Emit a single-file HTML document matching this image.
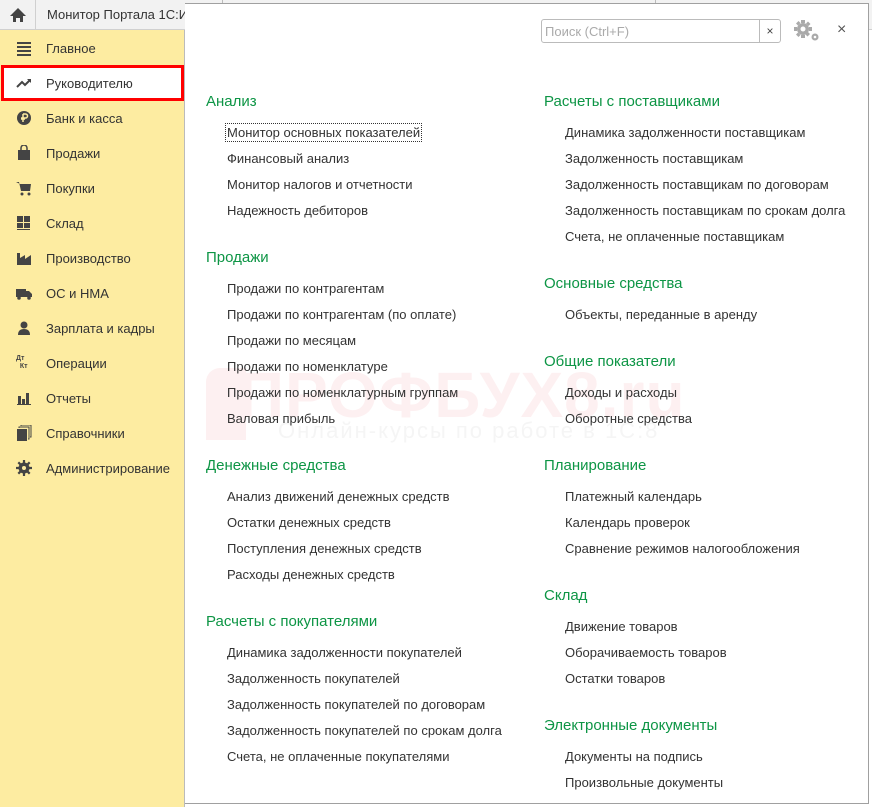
<!DOCTYPE html>
<html><head><meta charset="utf-8"><style>
*{margin:0;padding:0;box-sizing:border-box}
body{width:872px;height:807px;position:relative;overflow:hidden;background:#fff;font-family:"Liberation Sans",Arial,sans-serif;color:#333}
#top{position:absolute;left:0;top:0;width:872px;height:30px;background:#f2f2f2;border-bottom:1px solid #d0d0d0}
#home{position:absolute;left:0;top:0;width:36px;height:30px;border-right:1px solid #d0d0d0}
#tab{position:absolute;left:47px;top:7px;font-size:13px;color:#333}
#side{position:absolute;left:0;top:30px;width:185px;height:777px;background:#fdeca1;border-right:1px solid #bbb}
.si{position:absolute;left:46px;font-size:13px;color:#333}
.ic{position:absolute;left:16px;width:16px;height:16px}
#red{position:absolute;left:1px;top:65px;width:183px;height:36px;background:#fff;border:3px solid #f00}
#panel{position:absolute;left:185px;top:3px;width:684px;height:801px;background:#fff;border:1px solid #a0a0a0;border-left:none}
.h{position:absolute;font-size:15px;color:#0d9545;white-space:nowrap;margin-top:1px}
.l{position:absolute;font-size:13px;color:#333;white-space:nowrap;margin-top:1px}
#search{position:absolute;left:541px;top:19px;width:219px;height:24px;border:1px solid #bbb;border-radius:3px 0 0 3px;font-size:13px;color:#aaa;padding:4px 3px}
#sx{position:absolute;left:759px;top:19px;width:22px;height:24px;border:1px solid #bbb;border-radius:0 3px 3px 0;font-size:12px;text-align:center;line-height:22px;color:#444}
.wm{position:absolute;color:#fdf0f1;white-space:nowrap}
</style></head><body>
<div id="top">
<div id="home"><svg width="36" height="30"><path d="M10 16 L18 8 L26 16 L23 16 L23 22 L20 22 L20 18 L16 18 L16 22 L13 22 L13 16 Z" fill="#444"/></svg></div>
<div id="tab">Монитор Портала 1С:И</div>
<div style="position:absolute;left:222px;top:0;width:1px;height:4px;background:#bbb"></div>
<div style="position:absolute;left:655px;top:0;width:1px;height:4px;background:#bbb"></div>
</div>
<div id="side"></div>
<div id="red"></div>
<svg class="ic" style="top:40px" viewBox="0 0 16 16"><rect x="1" y="2" width="14" height="2" fill="#444"/><rect x="1" y="6" width="14" height="2" fill="#444"/><rect x="1" y="10" width="14" height="2" fill="#444"/><rect x="1" y="14" width="14" height="2" fill="#444"/></svg>
<div class="si" style="top:41px">Главное</div>
<svg class="ic" style="top:75px" viewBox="0 0 16 16"><path d="M1 12 L6 7 L9 10 L14 5" stroke="#444" stroke-width="2" fill="none"/><path d="M11 4 L15 4 L15 8Z" fill="#444"/></svg>
<div class="si" style="top:76px">Руководителю</div>
<svg class="ic" style="top:110px" viewBox="0 0 16 16"><circle cx="8" cy="8" r="7" fill="#444"/><path d="M7 4 V12 M5 9 H9 M7 4 H9.5 A2 2 0 0 1 9.5 8 H5" stroke="#fdeca1" stroke-width="1.5" fill="none"/></svg>
<div class="si" style="top:111px">Банк и касса</div>
<svg class="ic" style="top:145px" viewBox="0 0 16 16"><rect x="2" y="5" width="12" height="10" fill="#444"/><path d="M5 6 V3 A3 3 0 0 1 11 3 V6" stroke="#444" stroke-width="1.5" fill="none"/></svg>
<div class="si" style="top:146px">Продажи</div>
<svg class="ic" style="top:180px" viewBox="0 0 16 16"><path d="M0 2 H3 L5 11 H14 L15 4 H4" fill="#444"/><circle cx="6" cy="14" r="1.5" fill="#444"/><circle cx="13" cy="14" r="1.5" fill="#444"/></svg>
<div class="si" style="top:181px">Покупки</div>
<svg class="ic" style="top:215px" viewBox="0 0 16 16"><rect x="1" y="1" width="6" height="6" fill="#444"/><rect x="8" y="1" width="6" height="6" fill="#444"/><rect x="1" y="8" width="6" height="5" fill="#444"/><rect x="8" y="8" width="6" height="5" fill="#444"/><rect x="1" y="14" width="13" height="1" fill="#444"/></svg>
<div class="si" style="top:216px">Склад</div>
<svg class="ic" style="top:250px" viewBox="0 0 16 16"><path d="M1 15 V3 H4 V8 L9 5 V9 L15 5 V15Z" fill="#444"/></svg>
<div class="si" style="top:251px">Производство</div>
<svg class="ic" style="top:285px" viewBox="0 0 16 16"><path d="M0 4 H10 V12 H0Z M10 6 H13 L16 9 V12 H10Z" fill="#444"/><circle cx="3" cy="13" r="1.8" fill="#444"/><circle cx="13" cy="13" r="1.8" fill="#444"/></svg>
<div class="si" style="top:286px">ОС и НМА</div>
<svg class="ic" style="top:320px" viewBox="0 0 16 16"><circle cx="8" cy="5" r="3.5" fill="#444"/><path d="M2 15 Q2 9 8 9 Q14 9 14 15Z" fill="#444"/></svg>
<div class="si" style="top:321px">Зарплата и кадры</div>
<div style="position:absolute;left:16px;top:355px;font-size:7px;font-weight:bold;color:#444;line-height:8px">Дт<br>&nbsp;&nbsp;Кт</div>
<div class="si" style="top:356px">Операции</div>
<svg class="ic" style="top:390px" viewBox="0 0 16 16"><rect x="2" y="6" width="3" height="8" fill="#444"/><rect x="6" y="9" width="3" height="5" fill="#444"/><rect x="10" y="3" width="3" height="11" fill="#444"/><rect x="1" y="14" width="14" height="1" fill="#444"/></svg>
<div class="si" style="top:391px">Отчеты</div>
<svg class="ic" style="top:425px" viewBox="0 0 16 16"><rect x="1" y="4" width="10" height="12" fill="#444"/><path d="M3 3 V2 H13 V14 H12 M5 1 V0 H15 V12 H14" stroke="#444" fill="none"/></svg>
<div class="si" style="top:426px">Справочники</div>
<svg class="ic" style="top:460px" viewBox="0 0 16 16"><circle cx="8" cy="8" r="4" fill="none" stroke="#444" stroke-width="3"/><path d="M8 0 V16 M0 8 H16 M2.3 2.3 L13.7 13.7 M13.7 2.3 L2.3 13.7" stroke="#444" stroke-width="2.2"/><circle cx="8" cy="8" r="2" fill="#fdeca1"/></svg>
<div class="si" style="top:461px">Администрирование</div>

<div id="panel"></div>
<div id="search">Поиск (Ctrl+F)</div>
<div id="sx">×</div>
<svg style="position:absolute;left:793px;top:19px" width="28" height="24" viewBox="0 0 28 24"><g fill="#aaa"><circle cx="10" cy="10" r="6"/><path d="M8 1h4v3h-4zM8 16h4v3h-4zM1 8h3v4h-3zM16 8h3v4h-3zM3 4.5l2.5-2.5 2 2-2.5 2.5zM12.5 15.5l2.5-2.5 2 2-2.5 2.5zM3 15.5l2-2 2.5 2.5-2 2zM13 4.5l2-2 2.5 2.5-2 2z"/><circle cx="22" cy="18" r="3.5"/></g><circle cx="10" cy="10" r="2.5" fill="#fff"/><circle cx="22" cy="18" r="1.3" fill="#fff"/></svg>
<div style="position:absolute;left:837px;top:21px;font-size:16px;color:#555">×</div>

<div class="wm" style="left:206px;top:368px;width:40px;height:72px;background:#fdf0f1;border-radius:14px 0 0 0"></div>
<div class="wm" style="left:238px;top:358px;font-size:64px;font-weight:bold;letter-spacing:1px">ПРОФБУХ8.ru</div>
<div class="wm" style="left:278px;top:418px;font-size:22px;letter-spacing:2px;color:#f5f5f5">Онлайн-курсы по работе в 1С:8</div>

<div class="h" style="left:206px;top:92px">Анализ</div>
<div class="l" style="left:227px;top:124px;outline:1px dotted #333;outline-offset:1px">Монитор основных показателей</div>
<div class="l" style="left:227px;top:150px">Финансовый анализ</div>
<div class="l" style="left:227px;top:176px">Монитор налогов и отчетности</div>
<div class="l" style="left:227px;top:202px">Надежность дебиторов</div>
<div class="h" style="left:206px;top:248px">Продажи</div>
<div class="l" style="left:227px;top:280px">Продажи по контрагентам</div>
<div class="l" style="left:227px;top:306px">Продажи по контрагентам (по оплате)</div>
<div class="l" style="left:227px;top:332px">Продажи по месяцам</div>
<div class="l" style="left:227px;top:358px">Продажи по номенклатуре</div>
<div class="l" style="left:227px;top:384px">Продажи по номенклатурным группам</div>
<div class="l" style="left:227px;top:410px">Валовая прибыль</div>
<div class="h" style="left:206px;top:456px">Денежные средства</div>
<div class="l" style="left:227px;top:488px">Анализ движений денежных средств</div>
<div class="l" style="left:227px;top:514px">Остатки денежных средств</div>
<div class="l" style="left:227px;top:540px">Поступления денежных средств</div>
<div class="l" style="left:227px;top:566px">Расходы денежных средств</div>
<div class="h" style="left:206px;top:612px">Расчеты с покупателями</div>
<div class="l" style="left:227px;top:644px">Динамика задолженности покупателей</div>
<div class="l" style="left:227px;top:670px">Задолженность покупателей</div>
<div class="l" style="left:227px;top:696px">Задолженность покупателей по договорам</div>
<div class="l" style="left:227px;top:722px">Задолженность покупателей по срокам долга</div>
<div class="l" style="left:227px;top:748px">Счета, не оплаченные покупателями</div>

<div class="h" style="left:544px;top:92px">Расчеты с поставщиками</div>
<div class="l" style="left:565px;top:124px">Динамика задолженности поставщикам</div>
<div class="l" style="left:565px;top:150px">Задолженность поставщикам</div>
<div class="l" style="left:565px;top:176px">Задолженность поставщикам по договорам</div>
<div class="l" style="left:565px;top:202px">Задолженность поставщикам по срокам долга</div>
<div class="l" style="left:565px;top:228px">Счета, не оплаченные поставщикам</div>
<div class="h" style="left:544px;top:274px">Основные средства</div>
<div class="l" style="left:565px;top:306px">Объекты, переданные в аренду</div>
<div class="h" style="left:544px;top:352px">Общие показатели</div>
<div class="l" style="left:565px;top:384px">Доходы и расходы</div>
<div class="l" style="left:565px;top:410px">Оборотные средства</div>
<div class="h" style="left:544px;top:456px">Планирование</div>
<div class="l" style="left:565px;top:488px">Платежный календарь</div>
<div class="l" style="left:565px;top:514px">Календарь проверок</div>
<div class="l" style="left:565px;top:540px">Сравнение режимов налогообложения</div>
<div class="h" style="left:544px;top:586px">Склад</div>
<div class="l" style="left:565px;top:618px">Движение товаров</div>
<div class="l" style="left:565px;top:644px">Оборачиваемость товаров</div>
<div class="l" style="left:565px;top:670px">Остатки товаров</div>
<div class="h" style="left:544px;top:716px">Электронные документы</div>
<div class="l" style="left:565px;top:748px">Документы на подпись</div>
<div class="l" style="left:565px;top:774px">Произвольные документы</div>
</body></html>
